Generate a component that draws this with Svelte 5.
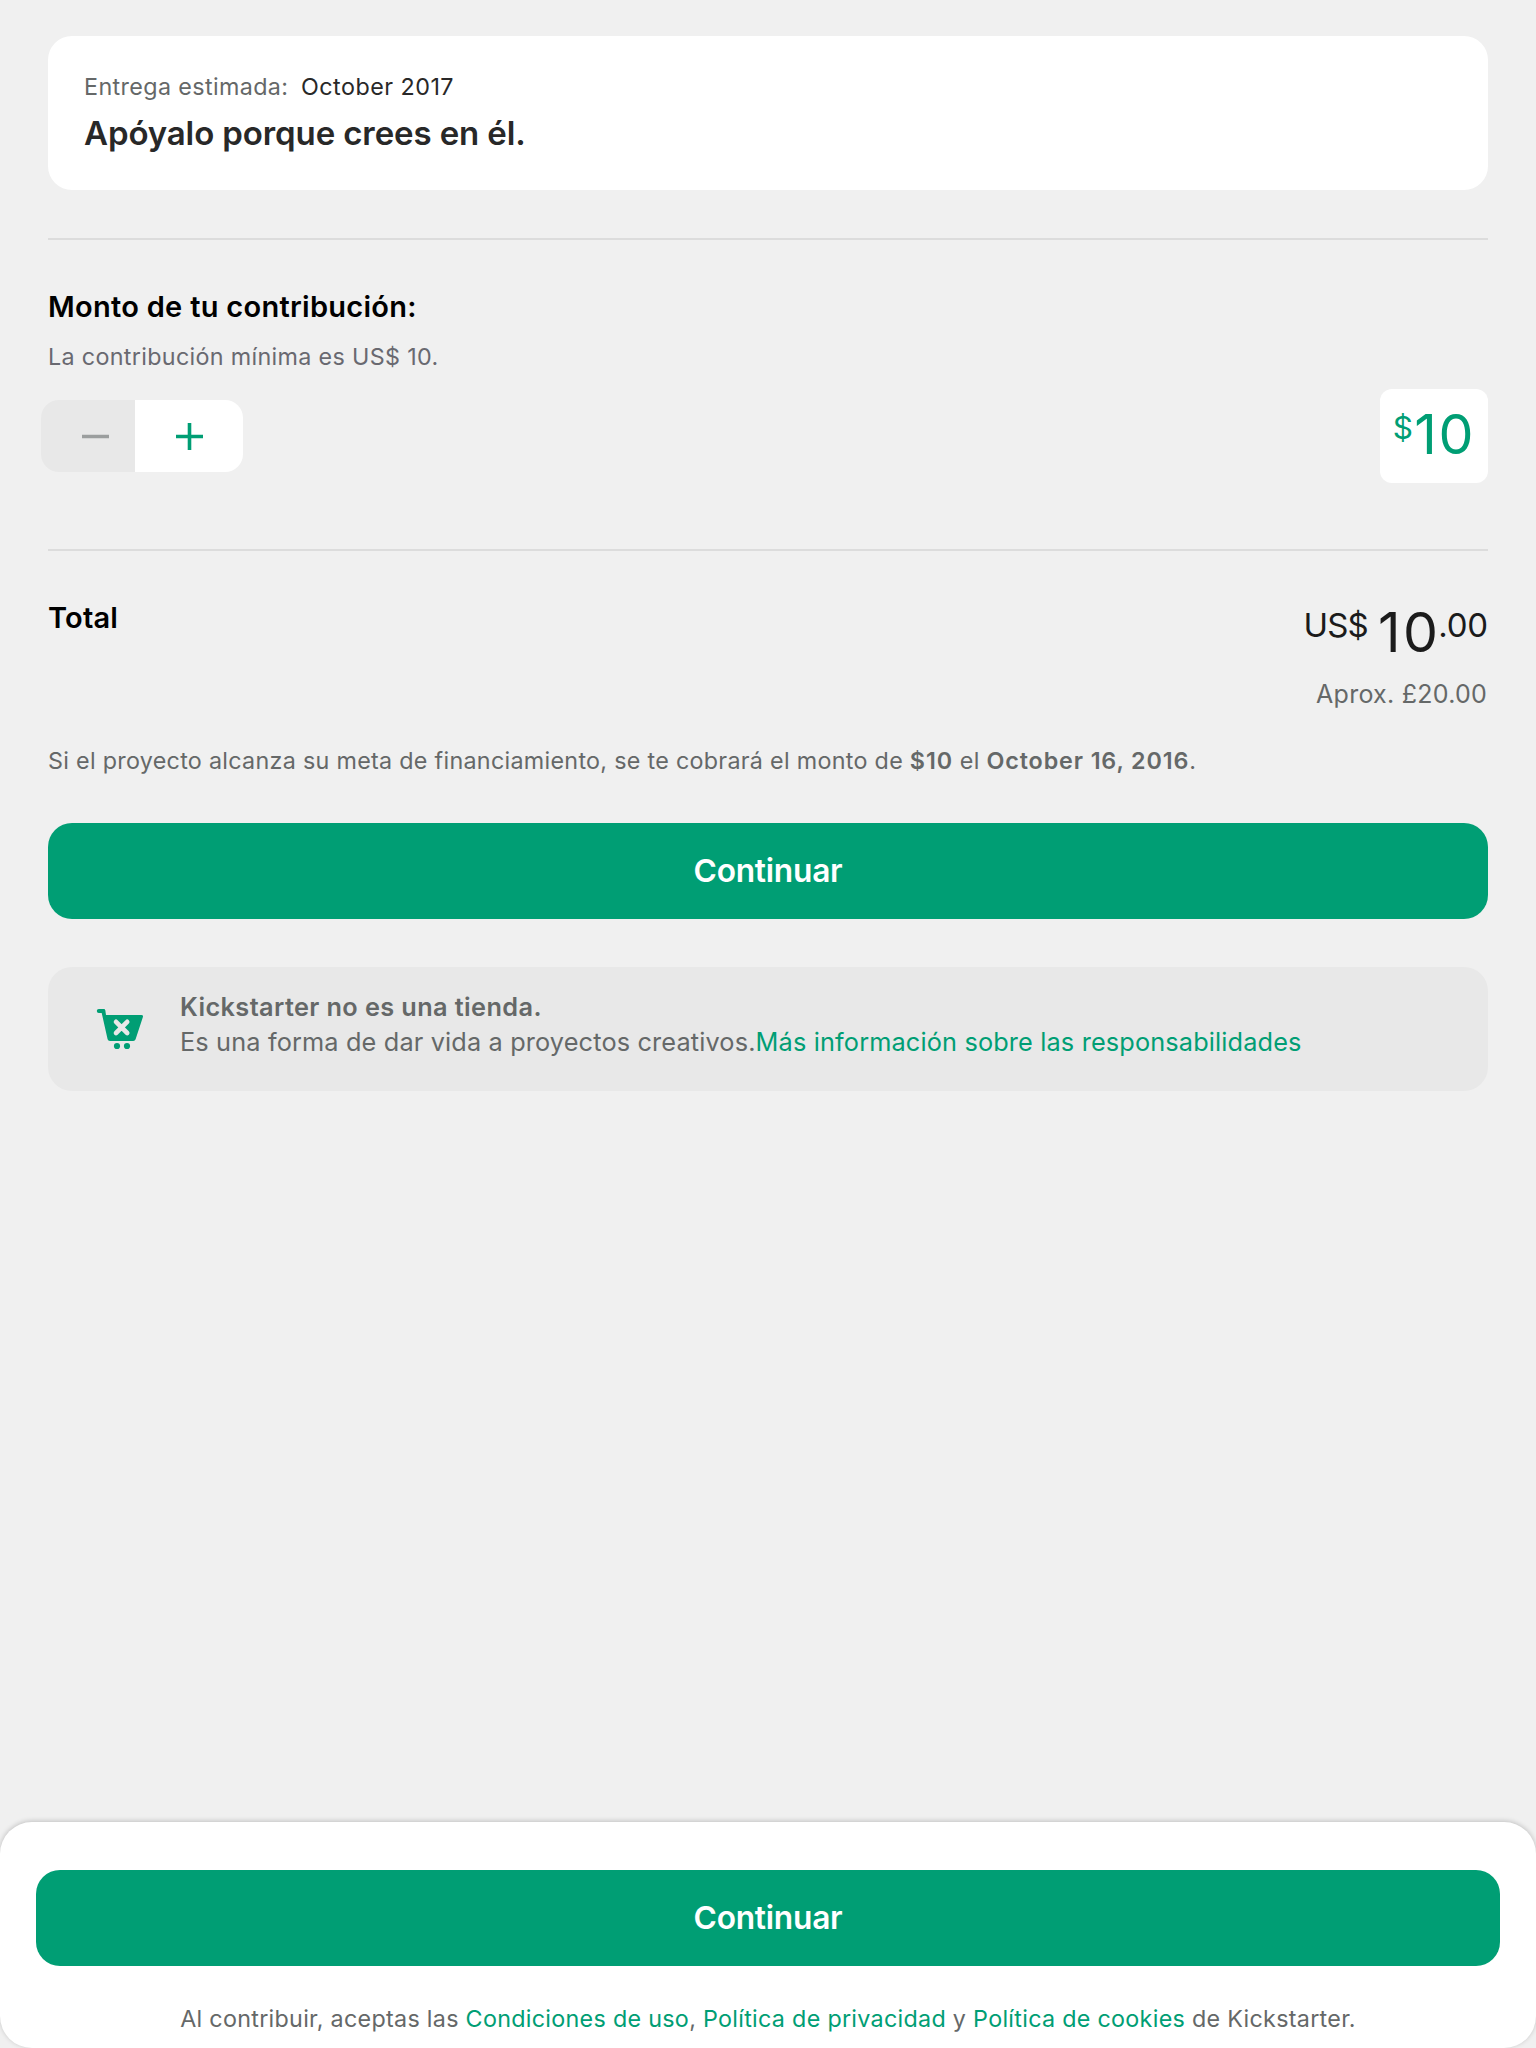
<script>
  let amount = $state(10);
  const minimum = 10;
</script>

<main class="page">
  <div class="content">
    <section class="reward">
      <p class="delivery"><span class="label">Entrega estimada:</span><span class="date">October 2017</span></p>
      <h1>Apóyalo porque crees en él.</h1>
    </section>

    <hr />

    <section class="pledge">
      <h2>Monto de tu contribución:</h2>
      <p class="minimum">La contribución mínima es US$ {minimum}.</p>
      <div class="controls">
        <div class="stepper">
          <button class="step minus" aria-label="Restar" disabled={amount <= minimum} onclick={() => (amount -= 1)}>
            <svg width="27" height="27" viewBox="0 0 27 27"><path d="M0 13.5H27" /></svg>
          </button>
          <button class="step plus" aria-label="Sumar" onclick={() => (amount += 1)}>
            <svg width="27" height="27" viewBox="0 0 27 27"><path d="M0 13.5H27M13.5 0V27" /></svg>
          </button>
        </div>
        <div class="amount"><span class="currency">$</span><span class="value">{amount}</span></div>
      </div>
    </section>

    <hr class="second" />

    <section class="total">
      <h2>Total</h2>
      <div class="figures">
        <div class="sum"><span class="unit">US$</span><span class="whole">{amount}</span><span class="cents">.00</span></div>
        <p class="approx">Aprox. £20.00</p>
      </div>
    </section>

    <p class="charge">Si el proyecto alcanza su meta de financiamiento, se te cobrará el monto de <b>${amount}</b> el <b>October 16, 2016</b>.</p>

    <button class="cta">Continuar</button>

    <section class="notice">
      <svg class="cart" width="48" height="42" viewBox="0 0 48 42">
        <path class="basket" d="M2.8 1H7.9Q9.1 1 9.3 2.3L10 7H45.3Q47.5 7 46.9 9L39.6 31.2Q39 33 37.2 33H14Q12 33 11.6 31.2L5.7 5H2.8A2 2 0 0 1 2.8 1Z" />
        <path class="cross" d="M20 13.8L31.2 25M31.2 13.8L20 25" />
        <circle cx="21" cy="38" r="3.1" />
        <circle cx="31" cy="38" r="3.1" />
      </svg>
      <div class="copy">
        <p><b>Kickstarter no es una tienda.</b></p>
        <p>Es una forma de dar vida a proyectos creativos.<a href="#responsabilidades">Más información sobre las responsabilidades</a></p>
      </div>
    </section>
  </div>

  <footer>
    <button class="cta">Continuar</button>
    <p class="legal">Al contribuir, aceptas las <a href="#condiciones">Condiciones de uso</a>, <a href="#privacidad">Política de privacidad</a> y <a href="#cookies">Política de cookies</a> de Kickstarter.</p>
  </footer>
</main>

<style>
  :global(body) {
    margin: 0;
    background: #f0f0f0;
  }

  .page {
    display: flex;
    flex-direction: column;
    min-height: 2048px;
    font-family: Inter, 'Liberation Sans', sans-serif;
    background: #f0f0f0;
    color: #656868;
  }

  .content {
    padding: 36px 48px 0;
  }

  h1,
  h2,
  p {
    margin: 0;
  }

  b {
    font-weight: 600;
  }

  a {
    color: #009e74;
    text-decoration: none;
  }

  button {
    border: 0;
    margin: 0;
    padding: 0;
    font-family: inherit;
  }

  hr {
    height: 2px;
    margin: 48px 0 0;
    border: 0;
    background: #dcdcdc;
  }

  .reward {
    padding: 36px 36px 37px;
    border-radius: 24px;
    background: #fff;
  }

  .delivery {
    display: flex;
    font-size: 23.3px;
    line-height: 29px;
    letter-spacing: 0.38px;
  }

  .date {
    margin-left: 12.6px;
    letter-spacing: 0.48px;
    color: #282828;
  }

  h1 {
    margin-top: 12px;
    font-size: 33px;
    font-weight: 600;
    line-height: 40px;
    letter-spacing: -0.11px;
    color: #282828;
  }

  h2 {
    font-size: 29px;
    font-weight: 600;
    line-height: 35px;
    letter-spacing: 0.28px;
    color: #000;
  }

  .pledge {
    padding-top: 49px;
  }

  .minimum {
    margin-top: 18px;
    font-size: 23.3px;
    line-height: 29px;
    letter-spacing: 0.33px;
    color: #696970;
  }

  .controls {
    display: flex;
    align-items: center;
    justify-content: space-between;
    margin-top: 18px;
  }

  .stepper {
    display: flex;
    height: 72px;
    margin-left: -7px;
    overflow: hidden;
    border-radius: 18px;
  }

  .step {
    display: flex;
    align-items: center;
  }

  .step path {
    fill: none;
    stroke: currentColor;
    stroke-width: 3.6;
  }

  .minus {
    width: 94px;
    padding-left: 40.5px;
    background: #e8e8e8;
    color: #9b9e9e;
  }

  .plus {
    width: 108px;
    padding-left: 40.5px;
    background: #fff;
    color: #009e74;
  }

  .amount {
    display: flex;
    align-items: flex-start;
    box-sizing: border-box;
    min-width: 108px;
    height: 94px;
    padding: 12px 0 0 12.8px;
    border-radius: 12px;
    background: #fff;
    color: #009e74;
  }

  .currency {
    margin-top: 8px;
    font-size: 31.5px;
    line-height: 38px;
  }

  .value {
    margin-left: 1.2px;
    font-size: 55.5px;
    line-height: 66px;
    letter-spacing: 1.8px;
  }

  .second {
    margin-top: 66px;
  }

  .total {
    display: flex;
    justify-content: space-between;
    align-items: flex-start;
    padding-top: 48px;
  }

  .total h2 {
    margin-top: 1px;
    letter-spacing: 0.2px;
  }

  .sum {
    display: flex;
    align-items: flex-start;
    justify-content: flex-end;
    color: #1b1b1b;
  }

  .unit,
  .cents {
    margin-top: 6px;
    font-size: 33px;
    line-height: 40px;
  }

  .unit {
    letter-spacing: -0.9px;
  }

  .cents {
    margin-left: -2.1px;
    letter-spacing: -0.2px;
  }

  .whole {
    margin-left: 10.2px;
    font-size: 55.5px;
    line-height: 66px;
    letter-spacing: 2.4px;
  }

  .approx {
    margin: 14px 1px 0 0;
    text-align: right;
    font-size: 25px;
    line-height: 30px;
    letter-spacing: 0.25px;
  }

  .charge {
    margin-top: 37px;
    font-size: 23.3px;
    line-height: 29px;
    letter-spacing: 0.295px;
  }

  .charge b {
    letter-spacing: 0.89px;
  }

  .cta {
    display: block;
    width: 100%;
    height: 96px;
    padding: 0;
    border-radius: 24px;
    background: #009e74;
    color: #fff;
    font-size: 31.7px;
    font-weight: 600;
    line-height: 96px;
    letter-spacing: -0.25px;
    text-align: center;
  }

  .content .cta {
    margin-top: 48px;
  }

  .notice {
    display: flex;
    align-items: flex-start;
    margin-top: 48px;
    padding: 22px 36px 32px 48px;
    border-radius: 24px;
    background: #e8e8e8;
  }

  .cart {
    flex: none;
    margin-top: 19px;
    fill: #009e74;
  }

  .cross {
    fill: none;
    stroke: #e8e8e8;
    stroke-width: 4.6;
    stroke-linecap: round;
  }

  .copy {
    margin-left: 36px;
    font-size: 25.3px;
    line-height: 35px;
    letter-spacing: 0.145px;
  }

  .copy b {
    letter-spacing: 0.39px;
  }

  footer {
    margin-top: auto;
    padding: 48px 36px 15px;
    border-radius: 32px;
    background: #fff;
    box-shadow: 0 -1px 5px rgba(0, 0, 0, 0.2);
  }

  .legal {
    margin-top: 38px;
    text-align: center;
    font-size: 23.3px;
    line-height: 29px;
    letter-spacing: 0.295px;
  }
</style>
